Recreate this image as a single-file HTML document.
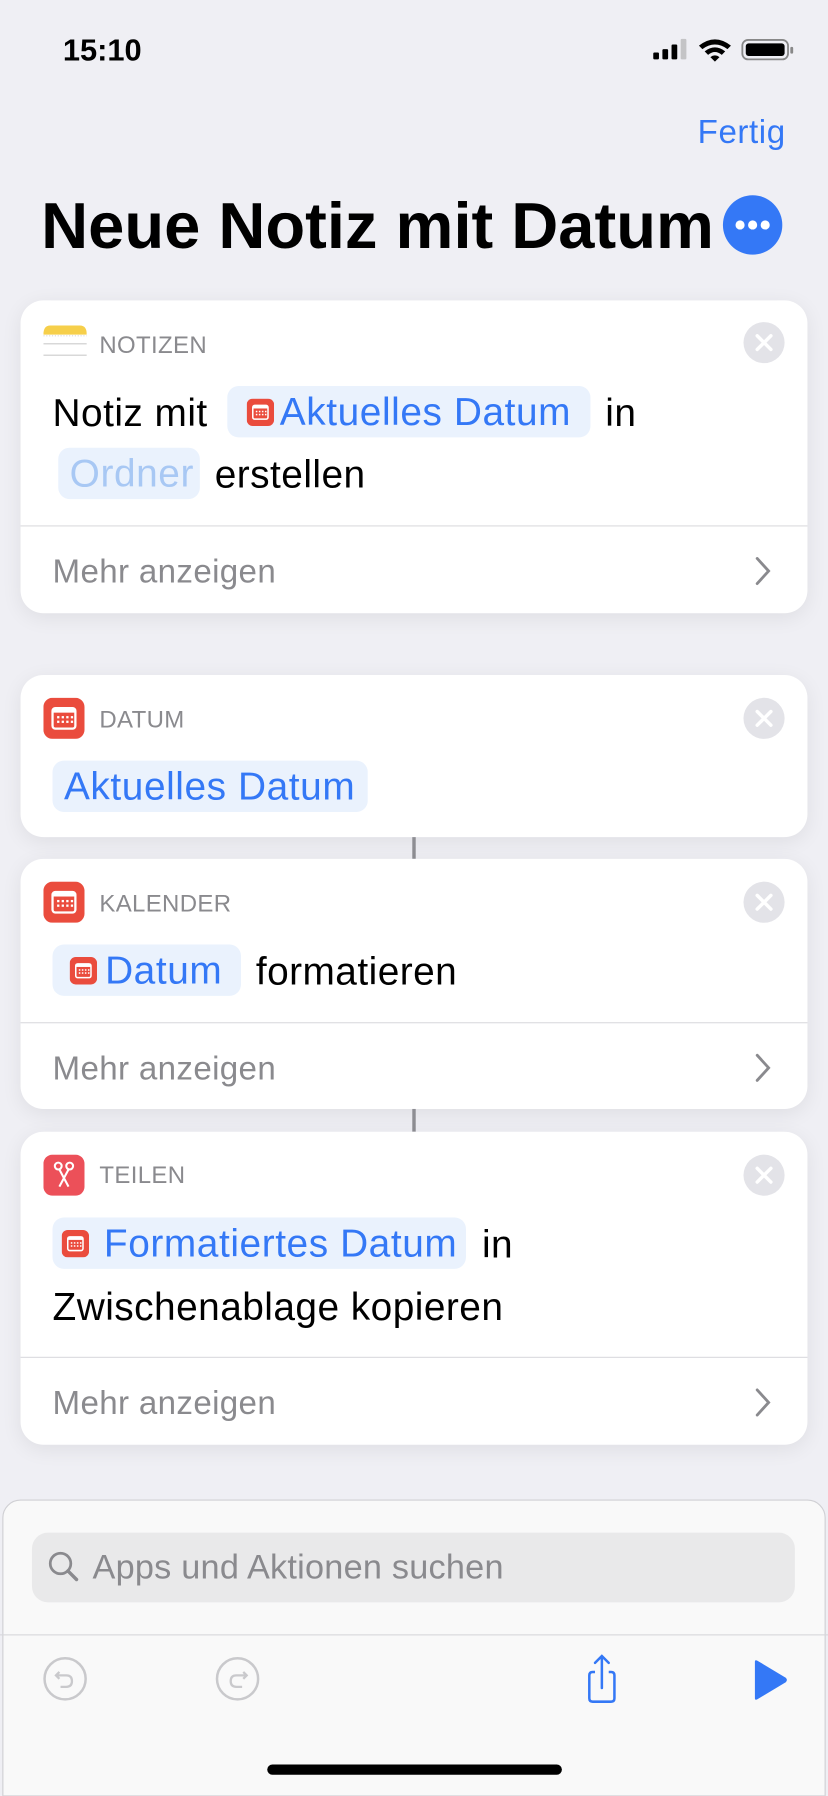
<!DOCTYPE html>
<html><head><meta charset="utf-8"><style>
*{margin:0;padding:0;box-sizing:border-box}
html,body{width:828px;height:1792px;overflow:hidden;background:#efeff4}
#w{position:absolute;left:0;top:0;width:725px;height:1569px;transform:scale(1.142069);transform-origin:0 0;font-family:"Liberation Sans",sans-serif;background:#efeff4}
.a{position:absolute;white-space:nowrap}
.card{position:absolute;left:18px;width:689px;background:#fff;border-radius:20px;box-shadow:0 4px 18px rgba(0,0,0,0.07)}
.lbl{position:absolute;left:69px;font-size:21px;color:#8a8a8e;letter-spacing:0.3px}
.x{position:absolute;left:633px;width:36px;height:36px;border-radius:50%;background:#e3e3e8}
.t{position:absolute;font-size:34px;letter-spacing:0.4px;color:#000}
.pill{position:absolute;height:45px;border-radius:10px;background:#eaf2fd;color:#3478f6;font-size:34px;letter-spacing:0.5px;line-height:47px}
.div{position:absolute;left:0;right:0;height:1px;background:#dcdcdf}
.more{position:absolute;left:28px;font-size:29px;letter-spacing:0.3px;color:#8a8a8e}
.cal{position:absolute;width:36px;height:36px}
.pc{position:absolute;width:24px;height:24px}
</style></head><body><div id="w">
<svg width="0" height="0" style="position:absolute"><defs><symbol id="c" viewBox="0 0 36 36"><rect width="36" height="36" rx="8" fill="#ea4c3d"/><rect x="8" y="9" width="20" height="18" rx="2.5" fill="none" stroke="#fff" stroke-width="2"/><rect x="8" y="9" width="20" height="4" fill="#fff"/><g fill="#fff"><rect x="12" y="16" width="2" height="2"/><rect x="16" y="16" width="2" height="2"/><rect x="20" y="16" width="2" height="2"/><rect x="24" y="16" width="2" height="2"/><rect x="12" y="20" width="2" height="2"/><rect x="16" y="20" width="2" height="2"/><rect x="20" y="20" width="2" height="2"/><rect x="24" y="20" width="2" height="2"/></g></symbol></defs></svg>
<div class="a" style="left:55px;top:29px;font-size:27px;font-weight:bold">15:10</div>
<svg class="a" style="left:570px;top:32px" width="130" height="24" viewBox="0 0 130 24">
<rect x="2" y="14" width="5" height="6" rx="1"/><rect x="10" y="11" width="5" height="9" rx="1"/><rect x="18" y="7" width="5" height="13" rx="1"/><rect x="26" y="2" width="5" height="18" rx="1" fill="#c4c4c6"/>
<path d="M42 8 Q56 -3 70 8 L67 11 Q56 3 45 11Z M47 13 Q56 6 65 13 L62 16 Q56 11 50 16Z M52 18 Q56 15 60 18 L56 22Z"/>
<rect x="80" y="3" width="40" height="17" rx="5" fill="none" stroke="#888" stroke-width="1.6"/><rect x="83" y="6" width="34" height="11" rx="2.5"/><rect x="122" y="9" width="2.5" height="6" rx="1" fill="#888"/></svg>
<div class="a" style="right:37px;top:100px;font-size:29px;letter-spacing:0.5px;color:#3478f6">Fertig</div>
<div class="a" style="left:36px;top:165px;font-size:57px;font-weight:bold;letter-spacing:0px">Neue Notiz mit Datum</div>
<svg class="a" style="left:632px;top:170px" width="54" height="54"><circle cx="27" cy="27" r="26" fill="#3478f6"/><circle cx="16" cy="27" r="4" fill="#fff"/><circle cx="27" cy="27" r="4" fill="#fff"/><circle cx="38" cy="27" r="4" fill="#fff"/></svg>

<div class="card" style="top:263px;height:274px">
<svg class="a" style="left:20px;top:20px" width="38" height="32"><path d="M0 10 Q0 2 6 2 H32 Q38 2 38 10 Z" fill="#f6cf4a"/><line x1="0" y1="11" x2="38" y2="11" stroke="#d6d6d6" stroke-dasharray="1 1.5"/><line x1="0" y1="18" x2="38" y2="18" stroke="#ccc"/><line x1="0" y1="28" x2="38" y2="28" stroke="#ccc"/></svg>
<div class="lbl" style="top:28px">NOTIZEN</div>
<svg class="x" style="top:19px" viewBox="0 0 36 36"><path d="M12 12 L24 24 M24 12 L12 24" stroke="#fff" stroke-width="3" stroke-linecap="round"/></svg>
<div class="t" style="left:28px;top:80px">Notiz mit</div>
<div class="pill" style="left:181px;top:75px;width:318px"><svg class="pc" style="left:17px;top:11px"><use href="#c"/></svg><span style="position:absolute;left:46px">Aktuelles Datum</span></div>
<div class="t" style="left:512px;top:80px">in</div>
<div class="pill" style="left:33px;top:129px;width:124px;color:#a8c8f4"><span style="position:absolute;left:10px">Ordner</span></div>
<div class="t" style="left:170px;top:134px">erstellen</div>
<div class="div" style="top:197px"></div>
<div class="more" style="top:222px">Mehr anzeigen</div>
<svg class="a" style="left:640px;top:223px" width="20" height="28"><path d="M5 3 L15 14 L5 25" fill="none" stroke="#8a8a8e" stroke-width="2.5" stroke-linecap="round"/></svg>
</div>

<div class="card" style="top:591px;height:142px">
<svg class="cal" style="left:20px;top:20px"><use href="#c"/></svg>
<div class="lbl" style="top:28px">DATUM</div>
<svg class="x" style="top:20px" viewBox="0 0 36 36"><path d="M12 12 L24 24 M24 12 L12 24" stroke="#fff" stroke-width="3" stroke-linecap="round"/></svg>
<div class="pill" style="left:28px;top:75px;width:276px"><span style="position:absolute;left:10px">Aktuelles Datum</span></div>
</div>
<div class="a" style="left:361px;top:733px;width:3px;height:19px;background:#8e8e93"></div>

<div class="card" style="top:752px;height:219px">
<svg class="cal" style="left:20px;top:20px"><use href="#c"/></svg>
<div class="lbl" style="top:28px">KALENDER</div>
<svg class="x" style="top:20px" viewBox="0 0 36 36"><path d="M12 12 L24 24 M24 12 L12 24" stroke="#fff" stroke-width="3" stroke-linecap="round"/></svg>
<div class="pill" style="left:28px;top:75px;width:165px"><svg class="pc" style="left:15px;top:11px"><use href="#c"/></svg><span style="position:absolute;left:46px">Datum</span></div>
<div class="t" style="left:206px;top:80px">formatieren</div>
<div class="div" style="top:143px"></div>
<div class="more" style="top:168px">Mehr anzeigen</div>
<svg class="a" style="left:640px;top:169px" width="20" height="28"><path d="M5 3 L15 14 L5 25" fill="none" stroke="#8a8a8e" stroke-width="2.5" stroke-linecap="round"/></svg>
</div>
<div class="a" style="left:361px;top:971px;width:3px;height:20px;background:#8e8e93"></div>

<div class="card" style="top:991px;height:274px">
<svg class="a" style="left:20px;top:20px" width="36" height="36"><rect width="36" height="36" rx="8" fill="#ec5059"/><circle cx="13" cy="10" r="3" fill="none" stroke="#fff" stroke-width="1.8"/><circle cx="23" cy="10" r="3" fill="none" stroke="#fff" stroke-width="1.8"/><path d="M14 13 L22 28 M22 13 L14 28" stroke="#fff" stroke-width="1.8"/></svg>
<div class="lbl" style="top:27px">TEILEN</div>
<svg class="x" style="top:20px" viewBox="0 0 36 36"><path d="M12 12 L24 24 M24 12 L12 24" stroke="#fff" stroke-width="3" stroke-linecap="round"/></svg>
<div class="pill" style="left:28px;top:75px;width:362px"><svg class="pc" style="left:8px;top:11px"><use href="#c"/></svg><span style="position:absolute;left:45px">Formatiertes Datum</span></div>
<div class="t" style="left:404px;top:80px">in</div>
<div class="t" style="left:28px;top:135px">Zwischenablage kopieren</div>
<div class="div" style="top:197px"></div>
<div class="more" style="top:222px">Mehr anzeigen</div>
<svg class="a" style="left:640px;top:223px" width="20" height="28"><path d="M5 3 L15 14 L5 25" fill="none" stroke="#8a8a8e" stroke-width="2.5" stroke-linecap="round"/></svg>
</div>

<div class="a" style="left:2px;top:1313px;width:721px;height:260px;background:#f9f9f9;border:1px solid #d0d0d4;border-radius:16px 16px 0 0"></div>
<div class="a" style="left:28px;top:1342px;width:668px;height:61px;background:#e9e9ea;border-radius:14px"></div>
<svg class="a" style="left:40px;top:1356px" width="32" height="32"><circle cx="13" cy="13" r="9" fill="none" stroke="#8a8a8e" stroke-width="2.4"/><path d="M19.5 19.5 L27 27" stroke="#8a8a8e" stroke-width="3" stroke-linecap="round"/></svg>
<div class="a" style="left:81px;top:1356px;font-size:30px;letter-spacing:0.2px;color:#8a8a8e">Apps und Aktionen suchen</div>
<div class="a" style="left:0;top:1431px;width:725px;height:1px;background:#d8d8dc"></div>
<svg class="a" style="left:36px;top:1449px" width="44" height="44"><circle cx="21" cy="21" r="18" fill="none" stroke="#c9c9cc" stroke-width="2.2"/><path d="M16 15 L13 18 L16 21 M13 18 H22 Q27 18 27 23 Q27 28 22 28 H17" fill="none" stroke="#c9c9cc" stroke-width="2"/></svg>
<svg class="a" style="left:187px;top:1449px" width="44" height="44"><circle cx="21" cy="21" r="18" fill="none" stroke="#c9c9cc" stroke-width="2.2"/><path d="M26 15 L29 18 L26 21 M29 18 H20 Q15 18 15 23 Q15 28 20 28 H25" fill="none" stroke="#c9c9cc" stroke-width="2"/></svg>
<svg class="a" style="left:506px;top:1447px" width="42" height="46"><path d="M15 17 H13 Q10 17 10 20 V40 Q10 43 13 43 H29 Q32 43 32 40 V20 Q32 17 29 17 H27" fill="none" stroke="#3478f6" stroke-width="2.2"/><path d="M21 31 V3 M15 9 L21 3 L27 9" fill="none" stroke="#3478f6" stroke-width="2.2" stroke-linecap="round"/></svg>
<svg class="a" style="left:659px;top:1452px" width="32" height="38"><path d="M2 3 Q2 1 4 2 L29 17 Q31 19 29 21 L4 36 Q2 37 2 35 Z" fill="#3478f6"/></svg>
<div class="a" style="left:234px;top:1545px;width:258px;height:9px;border-radius:5px;background:#000"></div>
</div></body></html>
